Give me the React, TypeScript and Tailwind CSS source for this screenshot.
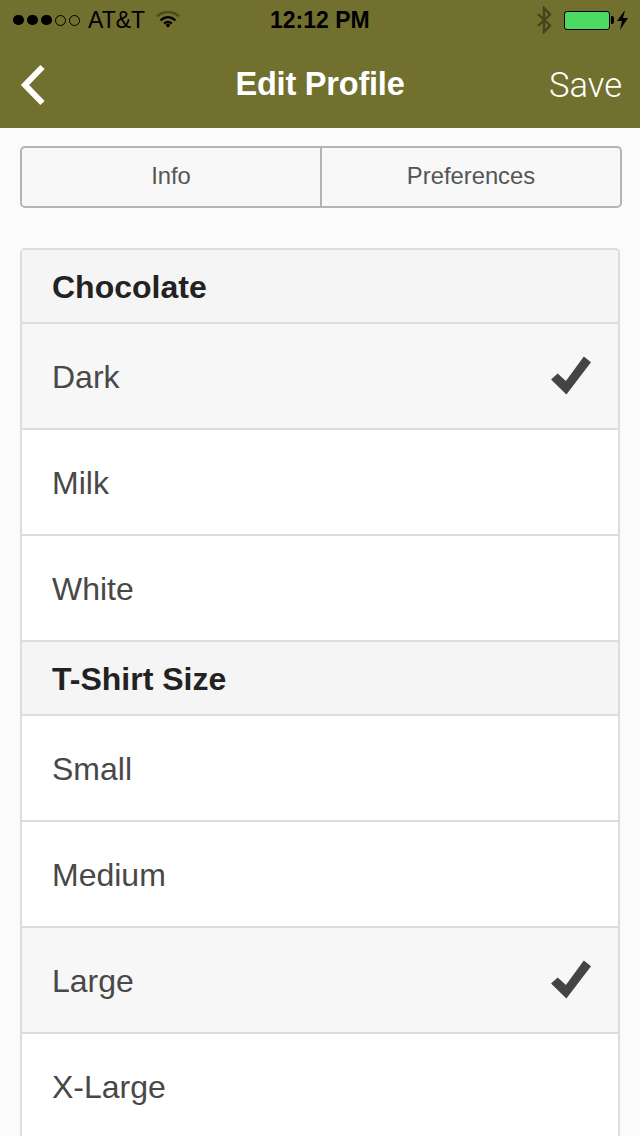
const sans = "font-['Liberation_Sans',Arial,sans-serif]";

function Check({ size }: { size: number }) {
  return (
    <svg width={size} height={size} viewBox="0 0 40 40" className="mb-[2px] text-[#444444]">
      <path d="M1 23 L7.5 17 L15.5 24.5 L33 0.5 L40 6 L16 37.5 Z" fill="currentColor" />
    </svg>
  );
}

function StatusBar() {
  return (
    <div className="relative flex h-10 items-center text-black">
      <div className="ml-[13px] flex items-center gap-[3px]">
        <span className="h-[10px] w-[11px] rounded-full bg-black" />
        <span className="h-[10px] w-[11px] rounded-full bg-black" />
        <span className="h-[10px] w-[11px] rounded-full bg-black" />
        <span className="h-[11px] w-[11px] rounded-full border border-black" />
        <span className="h-[11px] w-[11px] rounded-full border border-black" />
      </div>
      <span className="ml-[8px] text-[23px] leading-none">AT&amp;T</span>
      <svg width="24" height="19" viewBox="0 0 26 20" className="ml-[11px] mb-[1px]">
        <path d="M1 6.5 C8 0.5 18 0.5 25 6.5" fill="none" stroke="#4a4a1e" strokeWidth="2.6" />
        <path d="M5 11 C10 6.5 16 6.5 21 11" fill="none" stroke="#000" strokeWidth="2.6" />
        <path d="M8.8 14.5 C11.5 12 14.5 12 17.2 14.5" fill="none" stroke="#000" strokeWidth="2.4" />
        <path d="M10.5 16 L13 13.8 L15.5 16 L13 19 Z" fill="#000" />
      </svg>
      <span className="absolute left-[270px] top-[7px] text-[23px] font-bold leading-[26px]">12:12 PM</span>
      <div className="ml-auto mr-[11px] flex items-center">
        <svg width="16" height="28" viewBox="0 0 16 28" className="mr-[12px]">
          <path d="M2 8 L14 19.5 L8 26 L8 2 L14 8.5 L2 20" fill="none" stroke="#44441c" strokeWidth="2.4" />
        </svg>
        <div className="h-[19px] w-[46px] rounded-[3px] border-[1.5px] border-black bg-[#4cd964]" />
        <span className="ml-[1px] h-[8px] w-[3px] rounded-r-[2px] bg-black" />
        <svg width="12" height="20" viewBox="0 0 12 20" className="ml-[3px]">
          <path d="M8 0 L0 11 L5 11 L3 20 L11 8 L6 8 Z" fill="#000" />
        </svg>
      </div>
    </div>
  );
}

function NavBar() {
  return (
    <div className="relative flex h-[88px] items-center justify-center text-white">
      <svg width="26" height="42" viewBox="0 0 26 42" className="absolute left-[20px] top-[24px]">
        <path d="M22.5 3 L5 21 L22.5 39" fill="none" stroke="#fff" strokeWidth="6" />
      </svg>
      <span className="text-[32.5px] font-bold leading-none tracking-[-0.2px]">Edit Profile</span>
      <span className="absolute right-[18px] top-[27px] font-['Roboto',sans-serif] text-[34.5px] font-light leading-[36px]">Save</span>
    </div>
  );
}

function SectionHeader({ label }: { label: string }) {
  return (
    <div className="flex h-[74px] items-center border-b-2 border-[#dddddd] bg-[#f5f5f5] pl-[30px] pt-[2px]">
      <span className="text-[32px] font-bold leading-none text-[#222222]">{label}</span>
    </div>
  );
}

function OptionRow({ label, selected }: { label: string; selected?: boolean }) {
  return (
    <div className={`flex h-[106px] items-center justify-between border-b-2 border-[#dddddd] pl-[30px] pr-[27px] pt-[2px] ${selected ? 'bg-[#f7f7f7]' : 'bg-white'}`}>
      <span className="text-[32px] leading-none text-[#484848]">{label}</span>
      {selected && <Check size={41} />}
    </div>
  );
}

export default function App() {
  return (
    <div className={`h-[1136px] w-[640px] overflow-hidden bg-[#fbfbfb] ${sans}`}>
      <div className="bg-[#72702f]">
        <StatusBar />
        <NavBar />
      </div>

      <div className="mx-5 mt-[18px] flex h-[62px] w-[602px] rounded-[5px] border-2 border-[#b4b4b4] bg-[#f8f8f8] text-[23.8px] text-[#555555]">
        <div className="flex flex-1 items-center justify-center border-r-2 border-[#b4b4b4] pb-[2px]">Info</div>
        <div className="flex flex-1 items-center justify-center pb-[2px]">Preferences</div>
      </div>

      <div className="ml-5 mt-[40px] w-[600px] overflow-hidden rounded-t-[5px] border-x-2 border-t-2 border-[#dddddd]">
        <SectionHeader label="Chocolate" />
        <OptionRow label="Dark" selected />
        <OptionRow label="Milk" />
        <OptionRow label="White" />
        <SectionHeader label="T-Shirt Size" />
        <OptionRow label="Small" />
        <OptionRow label="Medium" />
        <OptionRow label="Large" selected />
        <OptionRow label="X-Large" />
      </div>
    </div>
  );
}
